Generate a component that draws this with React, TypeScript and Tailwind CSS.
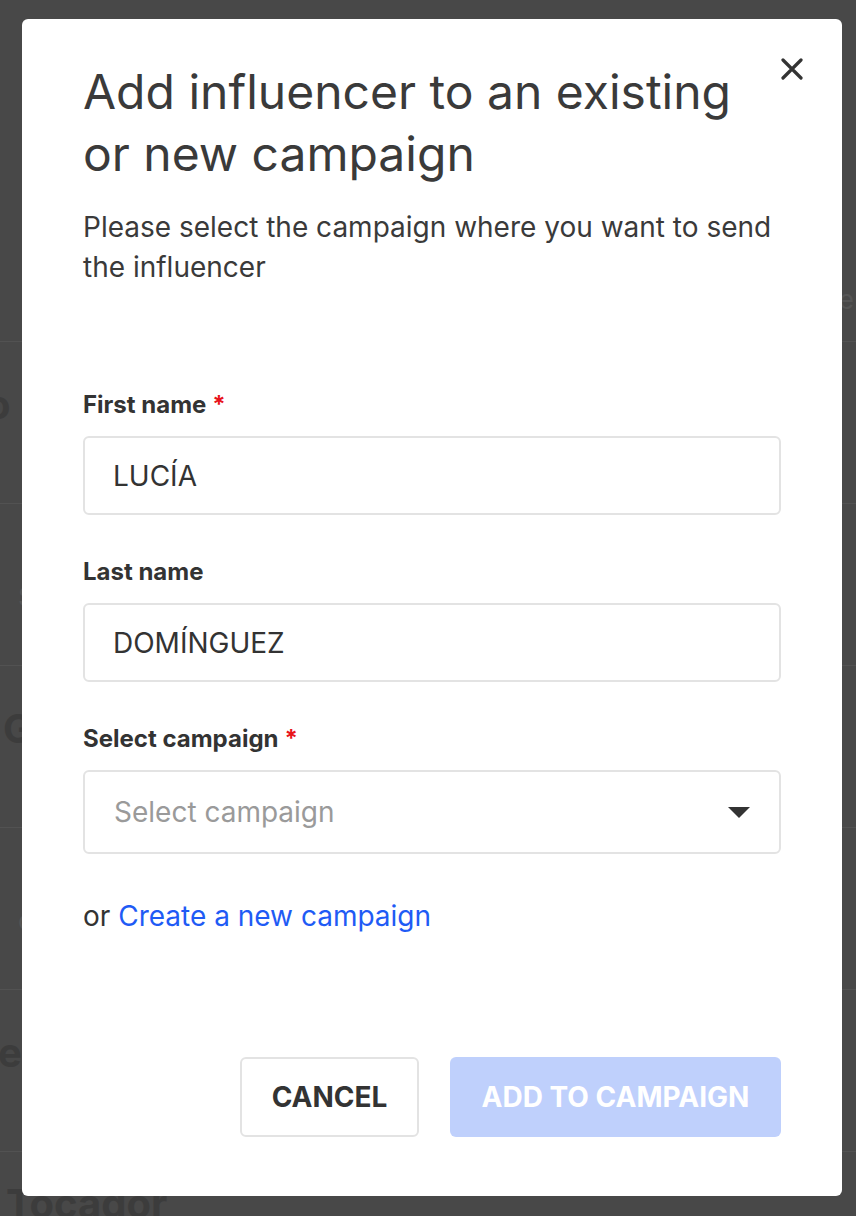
import React, { useState } from 'react';

// Faint page content sitting behind the modal overlay
const BG_ROWS = [
  { text: 'o', offset: '-ml-[14px]', sub: '' },
  { text: '', offset: '', sub: 'S' },
  { text: 'G', offset: 'ml-[3px]', sub: '' },
  { text: '', offset: '', sub: 'oa' },
  { text: 'e', offset: '-ml-[2px]', sub: '' },
];

const Field: React.FC<{ label: string; required?: boolean; value: string; onChange: (v: string) => void }> = ({
  label,
  required,
  value,
  onChange,
}) => (
  <div className="flex flex-col">
    <label className="text-[24px] font-bold leading-[30px] text-[#333]">
      {label}
      {required && <span className="ml-[6px] text-[#e8141b]">*</span>}
    </label>
    <input
      value={value}
      onChange={(e) => onChange(e.target.value)}
      className="mt-[16px] h-[79px] w-full rounded-[6px] border-2 border-[#e3e3e3] px-[28px] text-[28px] text-[#333] outline-none"
    />
  </div>
);

export default function App() {
  const [firstName, setFirstName] = useState('LUCÍA');
  const [lastName, setLastName] = useState('DOMÍNGUEZ');

  return (
    <div className="relative h-[1216px] w-full overflow-hidden bg-[#484848] font-['Inter',sans-serif]">
      {/* background page */}
      <div className="pt-[180px]">
        <div className="h-[162px] border-b border-[#525252]">
          <div className="flex justify-end pt-[100px] pr-[2px] text-[26px] text-[#555]">e</div>
        </div>
        {BG_ROWS.map((r, i) => (
          <div key={i} className="flex h-[162px] flex-col border-b border-[#525252] pt-[33px]">
            {r.text && <span className={`${r.offset} text-[40px] leading-[60px] font-bold text-[#3c3c3c]`}>{r.text}</span>}
            {r.sub && (
              <span className="pt-[40px] pl-[18px] text-[26px] text-[#555]">{r.sub}</span>
            )}
          </div>
        ))}
        <div className="pt-[22px] pl-[6px] text-[40px] font-bold text-[#3c3c3c]">Tocador</div>
      </div>

      {/* overlay + modal */}
      <div className="absolute inset-0 flex justify-start pt-[19px] pl-[22px]">
        <div className="relative h-[1177px] w-[820px] rounded-[6px] bg-white px-[61px] pt-[42px]">
          <button className="absolute top-[39px] right-[39px] flex text-[#333]" aria-label="Close">
            <svg width="22" height="22" viewBox="0 0 22 22" fill="none" stroke="currentColor" strokeWidth="3.2" strokeLinecap="round">
              <path d="M2 2 L20 20 M20 2 L2 20" />
            </svg>
          </button>

          <h2 className="pr-[40px] text-[48px] leading-[62px] font-normal text-[#3a3a3a]">
            Add influencer to an existing or new campaign
          </h2>
          <p className="mt-[22px] text-[28px] leading-[40px] text-[#3a3a3a]">
            Please select the campaign where you want to send the influencer
          </p>

          <div className="mt-[103px] flex flex-col gap-[42px]">
            <Field label="First name" required value={firstName} onChange={setFirstName} />
            <Field label="Last name" value={lastName} onChange={setLastName} />
            <div className="flex flex-col">
              <label className="text-[24px] font-bold leading-[30px] text-[#333]">
                Select campaign<span className="ml-[6px] text-[#e8141b]">*</span>
              </label>
              <div className="mt-[16px] flex h-[84px] w-full items-center justify-between rounded-[6px] border-2 border-[#e3e3e3] pr-[29px] pl-[29px]">
                <span className="text-[28px] text-[#9a9a9a]">Select campaign</span>
                <svg width="22" height="11" viewBox="0 0 22 11" fill="#333">
                  <path d="M0 0 H22 L11 11 Z" />
                </svg>
              </div>
            </div>
          </div>

          <p className="mt-[41px] text-[28px] leading-[42px] text-[#333]">
            or <a className="text-[#1f5bf5]">Create a new campaign</a>
          </p>

          <div className="mt-[120px] flex justify-end gap-[31px]">
            <button className="h-[80px] w-[179px] rounded-[6px] border-2 border-[#e3e3e3] text-[28px] font-bold text-[#333]">
              CANCEL
            </button>
            <button disabled className="h-[80px] w-[331px] rounded-[6px] bg-[#bfd0fc] text-[28px] font-bold text-white">
              ADD TO CAMPAIGN
            </button>
          </div>
        </div>
      </div>
    </div>
  );
}
